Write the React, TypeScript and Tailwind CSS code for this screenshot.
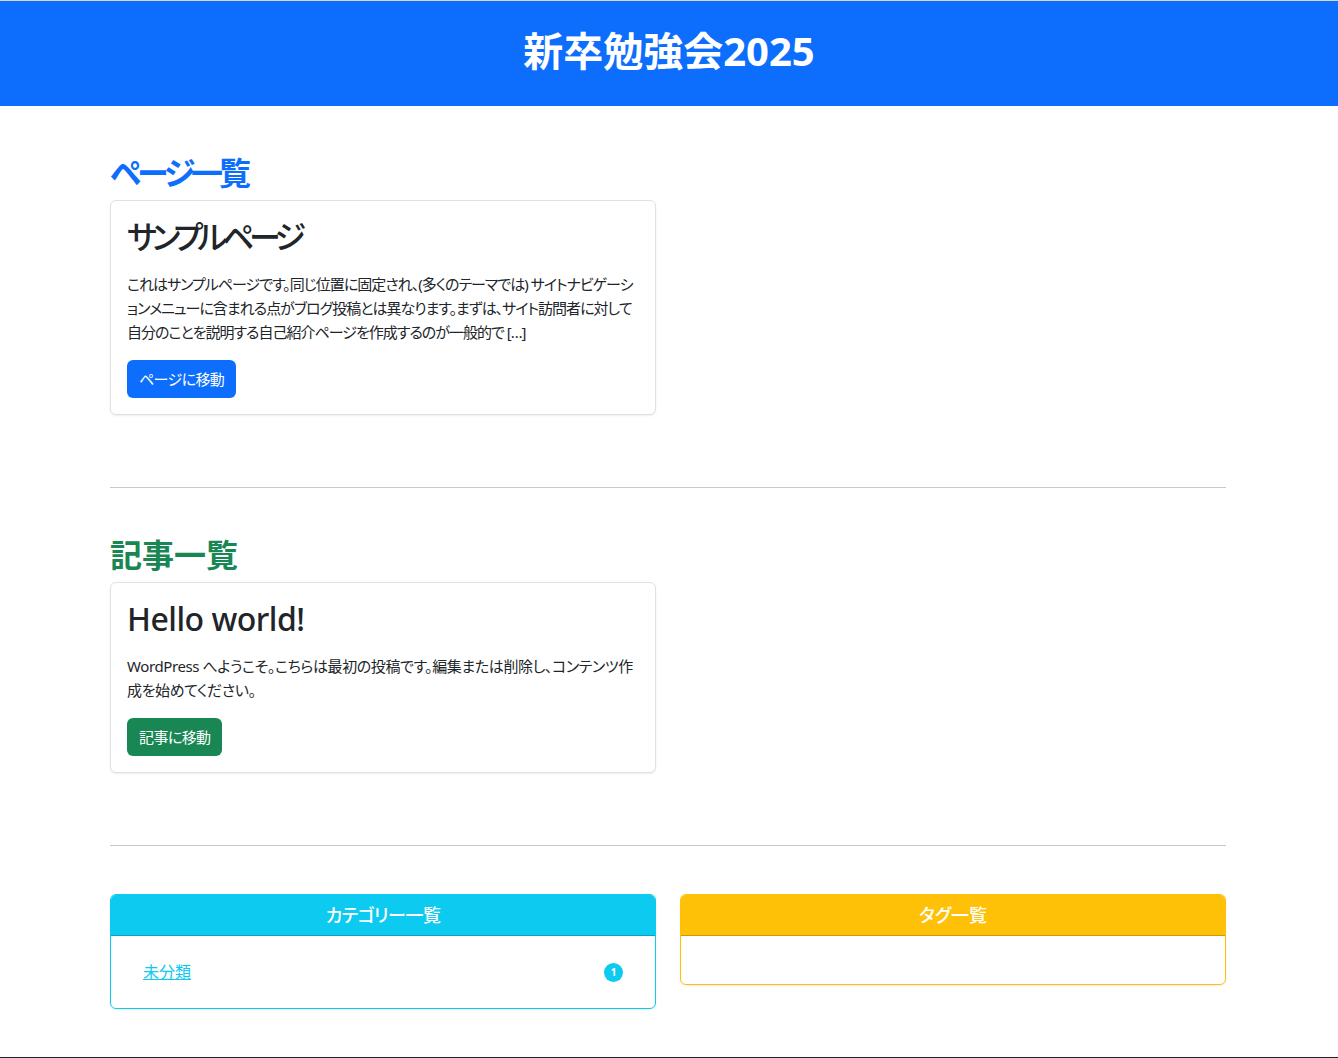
const FONT = "font-['Noto_Sans','Noto_Sans_CJK_JP',sans-serif] [font-feature-settings:'palt']";

interface PostCardProps {
  title: string;
  titleClass?: string;
  excerpt: string;
  excerptClass?: string;
  button: string;
  variant: 'blue' | 'green';
}

function PostCard({ title, titleClass = '', excerpt, excerptClass = '', button, variant }: PostCardProps) {
  return (
    <div className="w-[546px] rounded-md border border-[#dee2e6] bg-white shadow-[0_1px_2px_rgba(0,0,0,0.075)]">
      <div className="p-4">
        <h3 className={`mb-4 text-[32px] font-medium leading-[39px] text-[#212529] ${titleClass}`}>{title}</h3>
        <p className={`mb-4 text-[15px] leading-6 text-[#212529] ${excerptClass}`}>{excerpt}</p>
        <a
          href="#"
          className={`inline-block rounded-md px-3 py-1.5 text-[15px] leading-[26px] tracking-[-0.6px] text-white ${
            variant === 'blue' ? 'bg-[#0d6efd]' : 'bg-[#198754]'
          }`}
        >
          {button}
        </a>
      </div>
    </div>
  );
}

export default function App() {
  return (
    <div className={`min-h-screen bg-white ${FONT}`}>
      <header className="border-t border-[#d6d6d6] bg-[#0d6efd] pt-px">
        <h1 className="pb-[35px] pt-[28px] text-center text-[40px] font-bold leading-[41px] text-white">新卒勉強会2025</h1>
      </header>

      <main className="ml-[110px] w-[1116px] pb-12 pt-12">
        <section className="pb-6">
          <h2 className="mb-2 text-[32px] font-bold leading-[38px] tracking-[-4px] text-[#0d6efd]">ページ一覧</h2>
          <PostCard
            variant="blue"
            title="サンプルページ"
            titleClass="tracking-[-5.5px]"
            excerpt="これはサンプルページです。同じ位置に固定され、(多くのテーマでは) サイトナビゲーションメニューに含まれる点がブログ投稿とは異なります。まずは、サイト訪問者に対して自分のことを説明する自己紹介ページを作成するのが一般的で […]"
            excerptClass="tracking-[-1px]"
            button="ページに移動"
          />
        </section>

        <hr className="my-12 border-t border-[#c8c9ca]" />

        <section className="pb-6">
          <h2 className="mb-2 text-[32px] font-bold leading-[38px] text-[#198754]">記事一覧</h2>
          <PostCard
            variant="green"
            title="Hello world!"
            titleClass="tracking-[-0.5px]"
            excerpt="WordPress へようこそ。こちらは最初の投稿です。編集または削除し、コンテンツ作成を始めてください。"
            excerptClass="tracking-[-0.4px]"
            button="記事に移動"
          />
        </section>

        <hr className="my-12 border-t border-[#c8c9ca]" />

        <div className="flex items-start gap-6">
          <div className="w-[546px] overflow-hidden rounded-md border border-[#0dcaf0] shadow-[0_1px_2px_rgba(0,0,0,0.075)]">
            <div className="border-b border-[#0aa2c0] bg-[#0dcaf0] py-2 text-center text-[18px] font-medium leading-6 tracking-[-0.5px] text-white">
              カテゴリー一覧
            </div>
            <div className="p-4">
              <div className="flex items-center justify-between px-4 py-2">
                <a href="#" className="text-[16px] leading-6 text-[#0dcaf0] underline">未分類</a>
                <span className="flex h-[19px] w-[19px] items-center justify-center rounded-full bg-[#0dcaf0] text-[10px] font-bold text-white">
                  1
                </span>
              </div>
            </div>
          </div>

          <div className="w-[546px] overflow-hidden rounded-md border border-[#ffc107] shadow-[0_1px_2px_rgba(0,0,0,0.075)]">
            <div className="border-b border-[#cc9a06] bg-[#ffc107] py-2 text-center text-[18px] font-medium leading-6 text-white">
              タグ一覧
            </div>
            <div className="h-12" />
          </div>
        </div>
      </main>

      <footer className="h-16 bg-[#212529]" />
    </div>
  );
}
